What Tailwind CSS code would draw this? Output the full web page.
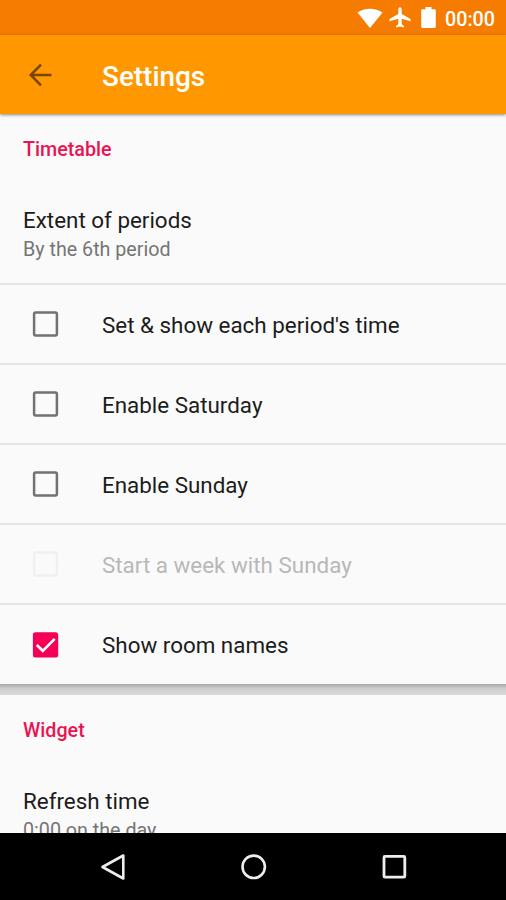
<!DOCTYPE html>
<html lang="en">
<head>
<meta charset="utf-8">
<title>Settings</title>
<script src="https://cdn.jsdelivr.net/npm/@tailwindcss/browser@4"></script>
</head>
<body class="font-[Roboto,'Liberation_Sans',sans-serif]">
<div class="flex h-[900px] w-[506px] flex-col overflow-hidden bg-[#fafafa] text-[22.400px] leading-[30px] text-[#1c1c1c]">
  <div class="flex h-[35px] shrink-0 items-center justify-end bg-[#f57c00] pr-[11px] text-white">
    <svg class="mr-[6px] h-[20px] w-[26px]" viewBox="0 0 26 20" fill="#fff"><path d="M0.500 4.500C7-.6 19-.6 25.500 4.500L13 20Z"/></svg>
    <svg class="mr-[10px] h-[21px] w-[22px]" viewBox="0 0 22 21" fill="#fff"><path d="M21.500 14.200v-2.100L12.700 7V2a1.700 1.700 0 0 0-3.400 0v5L.5 12.100v2.100l8.800-2.400v5.400L7 18.900V20.500l4-1 4 1v-1.600l-2.300-1.700v-5.400z"/></svg>
    <svg class="mr-[9px] h-[21px] w-[15px]" viewBox="0 0 15 21" fill="#fff"><path d="M1.500 2.300H4.500V0h6v2.300h3A1.300 1.300 0 0 1 14.800 3.600v16a1.300 1.300 0 0 1-1.300 1.300h-12A1.300 1.300 0 0 1 .2 19.600v-16a1.300 1.300 0 0 1 1.300-1.300z"/></svg>
    <span class="mt-[5px] text-[19.700px] leading-[24px] font-medium">00:00</span>
  </div>
  <header class="z-10 flex h-[79px] shrink-0 items-center bg-[#ff9800] pl-[28px] text-white shadow-[0_1px_3px_rgba(0,0,0,0.45)]">
    <svg class="h-[24px] w-[24px]" viewBox="0 0 24 24" fill="none" stroke="#754600" stroke-width="2.500"><path d="M23.500 12H2.500M13 1.700L2.700 12 13 22.300"/></svg>
    <h1 class="ml-[50px] pt-[5px] text-[27.900px] leading-[34px] font-medium">Settings</h1>
  </header>
  <main class="min-h-0 flex-1 overflow-hidden">
    <section>
      <h2 class="px-[23px] pt-[21px] text-[19.700px] leading-[30px] font-medium text-[#e91453]">Timetable</h2>
      <div class="h-[118px] px-[23px] pt-[40px]">
        <div>Extent of periods</div>
        <div class="text-[19.700px] leading-[29px] text-[#757575]">By the 6th period</div>
      </div>
      <div class="flex h-[80px] items-center border-t-2 border-[#e4e4e4] pl-[32px]"><svg class="h-[26px] w-[27px]" viewBox="0 0 27 26" fill="none" stroke="#727272" stroke-width="2.500"><rect x="2.100" y="1.600" width="22.800" height="22.800" rx="1.500"/></svg><span class="ml-[43px] pt-[2px]">Set &amp; show each period's time</span></div>
      <div class="flex h-[80px] items-center border-t-2 border-[#e4e4e4] pl-[32px]"><svg class="h-[26px] w-[27px]" viewBox="0 0 27 26" fill="none" stroke="#727272" stroke-width="2.500"><rect x="2.100" y="1.600" width="22.800" height="22.800" rx="1.500"/></svg><span class="ml-[43px] pt-[2px]">Enable Saturday</span></div>
      <div class="flex h-[80px] items-center border-t-2 border-[#e4e4e4] pl-[32px]"><svg class="h-[26px] w-[27px]" viewBox="0 0 27 26" fill="none" stroke="#727272" stroke-width="2.500"><rect x="2.100" y="1.600" width="22.800" height="22.800" rx="1.500"/></svg><span class="ml-[43px] pt-[2px]">Enable Sunday</span></div>
      <div class="flex h-[80px] items-center border-t-2 border-[#e4e4e4] pl-[32px]"><svg class="h-[26px] w-[27px]" viewBox="0 0 27 26" fill="none" stroke="#f0f0f0" stroke-width="2.500"><rect x="2.100" y="1.600" width="22.800" height="22.800" rx="1.500"/></svg><span class="ml-[43px] pt-[2px] text-[#b8b8b8]">Start a week with Sunday</span></div>
      <div class="flex h-[81px] items-center border-t-2 border-[#e4e4e4] pl-[32px]"><svg class="h-[26px] w-[27px]" viewBox="0 0 27 26" fill="none"><rect x="0.900" y="0.300" width="25.300" height="25.300" rx="2.500" fill="#f50057"/><path stroke="#fff" stroke-width="2.600" d="M4.800 13L10.800 18.800 22.700 6.800"/></svg><span class="ml-[43px]">Show room names</span></div>
    </section>
    <div class="h-[11px] bg-linear-to-b from-[#a6a6a6] via-[#cdcdcd] via-40% to-[#dadada]"></div>
    <section>
      <h2 class="px-[23px] pt-[21px] text-[19.700px] leading-[30px] font-medium text-[#e91453]">Widget</h2>
      <div class="px-[23px] pt-[40px]">
        <div>Refresh time</div>
        <div class="text-[19.700px] leading-[29px] text-[#757575]">0:00 on the day</div>
      </div>
    </section>
  </main>
  <nav class="z-10 flex h-[67px] shrink-0 items-center bg-black pl-[100px]">
    <svg class="h-[28px] w-[26px]" viewBox="0 0 26 28" fill="none" stroke="#eee" stroke-width="2.600" stroke-linejoin="round"><path d="M23.300 2.500V25.500L2.500 14Z"/></svg>
    <svg class="ml-[114px] h-[28px] w-[28px]" viewBox="0 0 28 28" fill="none" stroke="#eee" stroke-width="2.600"><circle cx="13.700" cy="13.800" r="11.200"/></svg>
    <svg class="ml-[112px] h-[28px] w-[28px]" viewBox="0 0 28 28" fill="none" stroke="#eee" stroke-width="2.800"><rect x="4" y="3.400" width="20.800" height="20.800" rx="1"/></svg>
  </nav>
</div>
</body>
</html>
